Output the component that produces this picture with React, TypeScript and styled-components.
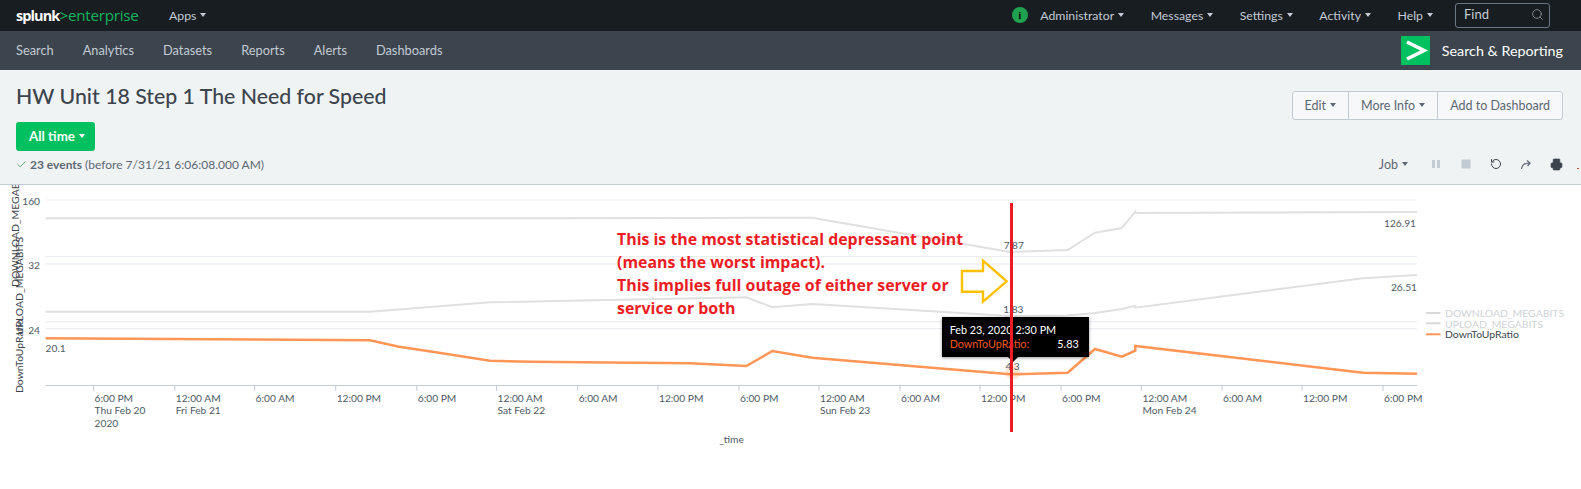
import React from "react";
import styled, { createGlobalStyle } from "styled-components";
import { Search, Check, RotateCcw, Printer } from "lucide-react";

const GlobalStyle = createGlobalStyle`
  html, body {
    margin: 0;
    padding: 0;
    background: #fff;
    font-family: Lato, "Open Sans", sans-serif;
    overflow: hidden;
  }
`;

const downloadPts = "45.6,218.3 530,218.3 690,218 812,217.7 1010,252 1067.6,250 1095,232.7 1121.8,228 1135.3,211.7 1135.3,213 1417,212";
const uploadPts = "45.6,311.7 370,311.7 490,302.3 746.4,297.3 772.4,307.3 812.3,304 1010,316 1067.6,315.5 1095,313 1121.8,309 1135.3,305.7 1135.3,307.7 1363,278.3 1417,275";
const ratioPts = "45.6,338.3 370,340.3 399,346.7 426,350.7 490,360.7 530,361.7 690,363.3 746.4,366 772.4,351 812.3,357.7 1010,374.3 1067.6,372.7 1095,349 1121.8,356.7 1135.3,350.7 1135.3,346 1363,372.7 1417,373.7";

const gridYs = [256.7, 264, 321.7, 328.7];

const ticks = [
  { x: 93.6, l: ["6:00 PM", "Thu Feb 20", "2020"] },
  { x: 174.8, l: ["12:00 AM", "Fri Feb 21"] },
  { x: 254.6, l: ["6:00 AM"] },
  { x: 335.7, l: ["12:00 PM"] },
  { x: 416.8, l: ["6:00 PM"] },
  { x: 496.6, l: ["12:00 AM", "Sat Feb 22"] },
  { x: 577.7, l: ["6:00 AM"] },
  { x: 658, l: ["12:00 PM"] },
  { x: 739, l: ["6:00 PM"] },
  { x: 819, l: ["12:00 AM", "Sun Feb 23"] },
  { x: 900, l: ["6:00 AM"] },
  { x: 980, l: ["12:00 PM"] },
  { x: 1061, l: ["6:00 PM"] },
  { x: 1141.4, l: ["12:00 AM", "Mon Feb 24"] },
  { x: 1222, l: ["6:00 AM"] },
  { x: 1302, l: ["12:00 PM"] },
  { x: 1383, l: ["6:00 PM"] },
];

function Caret() {
  return <CaretMark />;
}

export default function App() {
  return (
    <Page>
      <GlobalStyle />
      <TopBar>
        <Logo>
          splunk<LogoGreen>&gt;enterprise</LogoGreen>
        </Logo>
        <TopLink>
          Apps <Caret />
        </TopLink>
        <TopRight>
          <InfoDot>i</InfoDot>
          <TopLink>
            Administrator <Caret />
          </TopLink>
          <TopLink>
            Messages <Caret />
          </TopLink>
          <TopLink>
            Settings <Caret />
          </TopLink>
          <TopLink>
            Activity <Caret />
          </TopLink>
          <TopLink>
            Help <Caret />
          </TopLink>
          <FindBox>
            Find
            <Search size={13} strokeWidth={1.6} color="#8b949c" />
          </FindBox>
        </TopRight>
      </TopBar>

      <NavBar>
        <NavLink>Search</NavLink>
        <NavLink>Analytics</NavLink>
        <NavLink>Datasets</NavLink>
        <NavLink>Reports</NavLink>
        <NavLink>Alerts</NavLink>
        <NavLink>Dashboards</NavLink>
        <AppBadge>
          <AppIcon>
            <svg width="29" height="29" viewBox="0 0 29 29">
              <path d="M6 6 L23 14.5 L6 23" fill="none" stroke="#fff" strokeWidth="3.6" />
            </svg>
          </AppIcon>
          <AppName>Search &amp; Reporting</AppName>
        </AppBadge>
      </NavBar>

      <SearchHead>
        <TitleRow>
          <Title>HW Unit 18 Step 1 The Need for Speed</Title>
          <BtnGroup>
            <GroupBtn>
              Edit <Caret />
            </GroupBtn>
            <GroupBtn>
              More Info <Caret />
            </GroupBtn>
            <GroupBtn>Add to Dashboard</GroupBtn>
          </BtnGroup>
        </TitleRow>
        <TimeBtn>
          All time <Caret />
        </TimeBtn>
        <StatusRow>
          <Status>
            <Check size={11} color="#3c9a5f" strokeWidth={1.8} />
            <b>23 events</b> (before 7/31/21 6:06:08.000 AM)
          </Status>
          <JobTools>
            <JobLabel>
              Job <Caret />
            </JobLabel>
            <svg width="12" height="12" viewBox="0 0 12 12">
              <path d="M2 2h3v8H2zM7 2h3v8H7z" fill="#c3cbd4" />
            </svg>
            <svg width="12" height="12" viewBox="0 0 12 12">
              <rect x="1.5" y="1.5" width="9" height="9" fill="#c3cbd4" />
            </svg>
            <RotateCcw size={12} color="#3c444d" strokeWidth={2} />
            <svg width="12" height="12" viewBox="0 0 12 12">
              <path d="M1.5 11 C2 7 5 5 9.5 5 M7 2.5 L10 5 L7.5 8" fill="none" stroke="#5c6773" strokeWidth="1.2" />
            </svg>
            <Printer size={13} color="#3c444d" fill="#3c444d" strokeWidth={1.5} />
            <ExportStub />
          </JobTools>
        </StatusRow>
      </SearchHead>

      <ChartArea>
        <svg width="1581" height="304" viewBox="0 185 1581 304" style={{ display: "block" }}>
          <line x1="45.6" x2="1417" y1="200" y2="200" stroke="#f0f3f6" strokeWidth="1.5" />
          {gridYs.map((y) => (
            <line key={y} x1="45.6" x2="1417" y1={y} y2={y} stroke="#e6ebef" strokeWidth="1" />
          ))}
          <line x1="45.6" x2="1417" y1="385.5" y2="385.5" stroke="#c3cbd4" strokeWidth="1" />
          {ticks.map((t) => (
            <g key={t.x}>
              <line x1={t.x} x2={t.x} y1="385" y2="391" stroke="#c3cbd4" />
              {t.l.map((s, i) => (
                <ChartText key={s} x={t.x + 1} y={401.5 + i * 12.8}>
                  {s}
                </ChartText>
              ))}
            </g>
          ))}
          <ChartText x="40" y="204.5" textAnchor="end">160</ChartText>
          <ChartText x="40" y="269" textAnchor="end">32</ChartText>
          <ChartText x="40" y="333.5" textAnchor="end">24</ChartText>

          <SeriesText transform="translate(18.5,287) rotate(-90)">DOWNLOAD_MEGABITS</SeriesText>
          <SeriesText transform="translate(23,335) rotate(-90)">UPLOAD_MEGABITS</SeriesText>
          <SeriesText transform="translate(23,393) rotate(-90)">DownToUpRatio</SeriesText>

          <polyline points={downloadPts} fill="none" stroke="#e0e0e0" strokeWidth="2" />
          <polyline points={uploadPts} fill="none" stroke="#e0e0e0" strokeWidth="2" />
          <polyline points={ratioPts} fill="none" stroke="#ff9655" strokeWidth="2.5" />
          <circle cx="1012.7" cy="372" r="7.5" fill="#ff9655" opacity="0.25" />

          <ChartText x="1416" y="227" textAnchor="end">126.91</ChartText>
          <ChartText x="1417" y="290.5" textAnchor="end">26.51</ChartText>
          <ChartText x="45.6" y="352">20.1</ChartText>
          <ChartText x="1013.8" y="248.5" textAnchor="middle">7.87</ChartText>
          <ChartText x="1013.4" y="312.8" textAnchor="middle">1.83</ChartText>
          <ChartText x="1012.5" y="370" textAnchor="middle">4.3</ChartText>

          <line x1="1426" x2="1440.5" y1="313" y2="313" stroke="#d9d9d9" strokeWidth="2" />
          <SeriesText x="1445" y="317" $muted>DOWNLOAD_MEGABITS</SeriesText>
          <line x1="1426" x2="1440.5" y1="323.3" y2="323.3" stroke="#d9d9d9" strokeWidth="2" />
          <SeriesText x="1445" y="327.5" $muted>UPLOAD_MEGABITS</SeriesText>
          <line x1="1426" x2="1440.5" y1="334.3" y2="334.3" stroke="#ff9655" strokeWidth="2" />
          <SeriesText x="1445" y="338">DownToUpRatio</SeriesText>

          <ChartText x="731.5" y="443" textAnchor="middle">_time</ChartText>

          <polygon points="962,271 983,271 983,260.7 1006.7,281.3 983,301.7 983,291.7 962,291.7" fill="none" stroke="#ffc000" strokeWidth="2.4" />
        </svg>

        <Tooltip>
          <TipRow>Feb 23, 2020 2:30 PM</TipRow>
          <TipRow>
            <TipKey>DownToUpRatio:</TipKey>
            <span>5.83</span>
          </TipRow>
        </Tooltip>

        <Note>
          This is the most statistical depressant point
          <br />
          (means the worst impact).
          <br />
          This implies full outage of either server or
          <br />
          service or both
        </Note>
        <RedLine />
      </ChartArea>
    </Page>
  );
}

const Page = styled.div`
  width: 1581px;
  height: 489px;
  display: flex;
  flex-direction: column;
`;

const TopBar = styled.div`
  height: 31px;
  background: #171d21;
  display: flex;
  align-items: center;
  padding: 0 31px 0 16px;
  box-sizing: border-box;
`;

const Logo = styled.div`
  font-family: "Open Sans", sans-serif;
  font-size: 14.5px;
  font-weight: 700;
  letter-spacing: -0.9px;
  color: #fff;
  width: 153px;
`;

const LogoGreen = styled.span`
  color: #13b55e;
  font-size: 15.2px;
  font-weight: 500;
  letter-spacing: -0.25px;
`;

const TopLink = styled.div`
  color: #c3cbd4;
  font-size: 12.3px;
  display: flex;
  align-items: center;
  gap: 4px;
`;

const CaretMark = styled.span`
  display: inline-block;
  width: 0;
  height: 0;
  border-left: 3.5px solid transparent;
  border-right: 3.5px solid transparent;
  border-top: 4px solid currentColor;
`;

const TopRight = styled.div`
  margin-left: auto;
  display: flex;
  align-items: center;
  gap: 26.5px;
`;

const InfoDot = styled.div`
  width: 16px;
  height: 16px;
  border-radius: 50%;
  background: #1fa14f;
  color: #111;
  font-size: 11px;
  font-weight: 900;
  font-family: "Liberation Serif", serif;
  display: flex;
  align-items: center;
  justify-content: center;
  margin-right: -14px;
`;

const FindBox = styled.div`
  width: 95px;
  height: 25px;
  border: 1px solid #6b7785;
  border-radius: 3px;
  box-sizing: border-box;
  color: #c3cbd4;
  font-size: 13px;
  display: flex;
  align-items: center;
  justify-content: space-between;
  padding: 0 5px 2px 8px;
  margin-left: -4.5px;
`;

const NavBar = styled.div`
  height: 39px;
  background: #3c444d;
  display: flex;
  align-items: center;
  padding: 0 18px 0 16px;
  gap: 29px;
  box-sizing: border-box;
`;

const NavLink = styled.div`
  color: #c3cbd4;
  font-size: 12.8px;
`;

const AppBadge = styled.div`
  margin-left: auto;
  display: flex;
  align-items: center;
  gap: 12px;
`;

const AppIcon = styled.div`
  width: 29px;
  height: 29px;
  background: #00c060;
  display: flex;
`;

const AppName = styled.div`
  color: #fff;
  font-size: 14.3px;
`;

const SearchHead = styled.div`
  height: 116px;
  background: #f0f3f4;
  border-bottom: 1px solid #c3cbd4;
  box-sizing: border-box;
  padding: 0 18px 0 16px;
  display: flex;
  flex-direction: column;
`;

const TitleRow = styled.div`
  display: flex;
  justify-content: space-between;
  height: 52px;
`;

const Title = styled.h1`
  margin: 12px 0 0;
  font-size: 21.3px;
  line-height: 28px;
  font-weight: 500;
  color: #3c444d;
`;

const BtnGroup = styled.div`
  display: flex;
  height: 29px;
  margin-top: 21px;
  border: 1px solid #c3cbd4;
  border-radius: 3px;
  box-sizing: border-box;
  background: #f7f8fa;
`;

const GroupBtn = styled.div`
  padding: 0 12px;
  display: flex;
  align-items: center;
  gap: 4px;
  font-size: 12.5px;
  color: #5c6773;
  & + & {
    border-left: 1px solid #c3cbd4;
  }
`;

const TimeBtn = styled.div`
  width: 79px;
  height: 29px;
  background: #00c060;
  border-radius: 3px;
  box-sizing: border-box;
  padding-left: 3px;
  color: #fff;
  font-size: 13.3px;
  font-weight: 700;
  display: flex;
  align-items: center;
  justify-content: center;
  gap: 4px;
`;

const StatusRow = styled.div`
  display: flex;
  justify-content: space-between;
  align-items: center;
  height: 27px;
  margin-right: -16px;
`;

const Status = styled.div`
  font-size: 12px;
  color: #5c6773;
  display: flex;
  align-items: center;
  gap: 3px;
  b {
    font-weight: 700;
  }
`;

const JobTools = styled.div`
  display: flex;
  align-items: center;
  gap: 18px;
`;

const JobLabel = styled.div`
  font-size: 12.5px;
  color: #5c6773;
  display: flex;
  align-items: center;
  gap: 4px;
  margin-right: 4px;
`;

const ExportStub = styled.span`
  width: 2px;
  height: 1px;
  margin: 8px 0 0 -4px;
  background: #c0512a;
`;

const ChartArea = styled.div`
  position: relative;
  height: 304px;
  background: #fff;
`;

const ChartText = styled.text`
  font-size: 10.2px;
  fill: #4f5a66;
`;

const SeriesText = styled.text<{ $muted?: boolean }>`
  font-size: 10.4px;
  fill: ${(p) => (p.$muted ? "#d0d3d6" : "#3c444d")};
`;

const Tooltip = styled.div`
  position: absolute;
  left: 941.7px;
  top: 131.7px;
  width: 147px;
  height: 40.6px;
  background: #000;
  box-shadow: 0 1px 3px rgba(0, 0, 0, 0.4);
  box-sizing: border-box;
  padding: 6px 10px 0 8px;
  color: #fff;
  font-size: 10.8px;
  line-height: 14px;

  &::after {
    content: "";
    position: absolute;
    left: 66px;
    bottom: -5px;
    border-left: 5px solid transparent;
    border-right: 5px solid transparent;
    border-top: 5px solid #000;
  }
`;

const TipRow = styled.div`
  display: flex;
  justify-content: space-between;
`;

const TipKey = styled.span`
  color: #f2591f;
`;

const Note = styled.div`
  position: absolute;
  left: 617px;
  top: 43px;
  font-family: "Open Sans", sans-serif;
  font-size: 15.9px;
  font-weight: 700;
  line-height: 23px;
  color: #ed1c24;
  white-space: nowrap;
`;

const RedLine = styled.div`
  position: absolute;
  left: 1010.2px;
  top: 18px;
  width: 3.3px;
  height: 229px;
  background: #ed1c24;
`;
